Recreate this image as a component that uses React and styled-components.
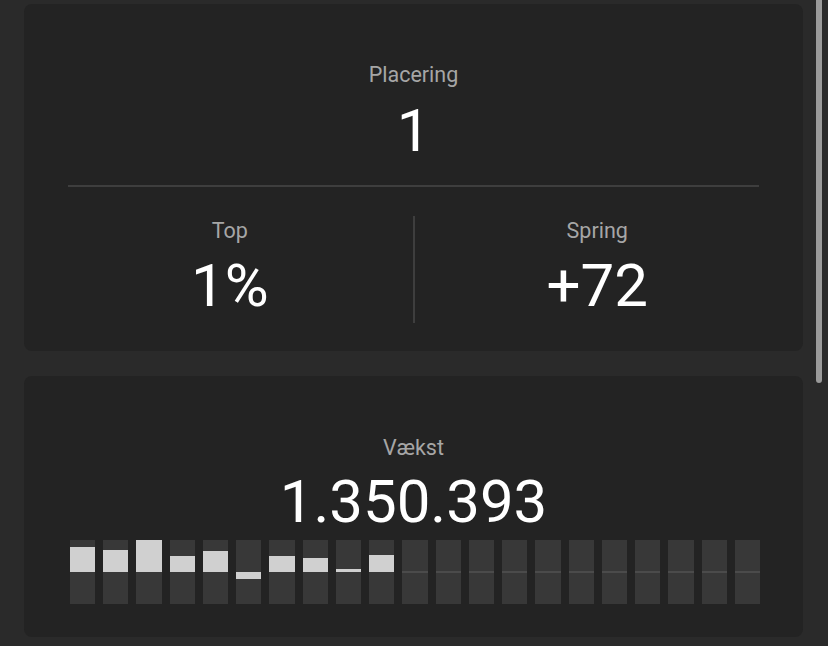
import React from "react";
import styled, { createGlobalStyle } from "styled-components";

const GlobalStyle = createGlobalStyle`
  html, body {
    margin: 0;
    padding: 0;
    background: #2a2a2a;
    overflow: hidden;
  }
  body {
    font-family: Roboto, "Liberation Sans", sans-serif;
  }
`;

const growth = [25, 22, 32, 16, 21, -7, 16, 14, 3, 17, 0, 0, 0, 0, 0, 0, 0, 0, 0, 0, 0];

const App = () => {
  return (
    <Page>
      <GlobalStyle />
      <Card $pb={0}>
        <Stat $top={58}>
          <Label>Placering</Label>
          <Value>1</Value>
        </Stat>
        <Divider />
        <Split>
          <Stat>
            <Label>Top</Label>
            <Value>1%</Value>
          </Stat>
          <VLine />
          <Stat>
            <Label>Spring</Label>
            <Value>+72</Value>
          </Stat>
        </Split>
      </Card>
      <Card $pb={33}>
        <Stat $top={59} $gap={12}>
          <Label>Vækst</Label>
          <Value>1.350.393</Value>
        </Stat>
        <Bars>
          {growth.map((v, i) => (
            <Bar key={i}>
              <Half $up>
                {v > 0 && <Fill style={{ height: v }} />}
              </Half>
              <Half>
                {v < 0 && <Fill style={{ height: -v }} />}
              </Half>
              {v === 0 && <Zero />}
            </Bar>
          ))}
        </Bars>
      </Card>
      <Card $pb={200} />
      <Thumb />
    </Page>
  );
};

const Page = styled.div`
  display: flex;
  flex-direction: column;
  gap: 25px;
  padding: 4px 25px 0 24px;
`;

const Card = styled.div`
  background: #232323;
  border-radius: 8px;
  padding: 0 44px ${(p) => p.$pb}px;
  display: flex;
  flex-direction: column;
`;

const Stat = styled.div`
  display: flex;
  flex-direction: column;
  align-items: center;
  gap: ${(p) => p.$gap || 14}px;
  padding-top: ${(p) => p.$top || 0}px;
`;

const Label = styled.div`
  font-size: 21.5px;
  line-height: 25px;
  color: #a6a6a6;
`;

const Value = styled.div`
  font-size: 60px;
  line-height: 60px;
  color: #ffffff;
`;

const Divider = styled.div`
  height: 2px;
  background: #3e3e3e;
  margin-top: 24px;
`;

const Split = styled.div`
  display: grid;
  grid-template-columns: 1fr 2px 1fr;
  column-gap: 21px;
  padding: 29px 0 28px;
  ${Stat} {
    padding-top: 2px;
    gap: 13px;
  }
`;

const VLine = styled.div`
  background: #3e3e3e;
  height: 107px;
`;

const Bars = styled.div`
  display: grid;
  grid-template-columns: repeat(21, 1fr);
  column-gap: 8px;
  margin: 8px -1px 0 2px;
`;

const Bar = styled.div`
  position: relative;
  height: 64px;
  background: #383838;
  display: flex;
  flex-direction: column;
`;

const Half = styled.div`
  flex: 1;
  display: flex;
  flex-direction: column;
  justify-content: ${(p) => (p.$up ? "flex-end" : "flex-start")};
`;

const Fill = styled.div`
  background: #d0d0d0;
`;

const Zero = styled.div`
  position: absolute;
  left: 0;
  right: 0;
  top: 31px;
  height: 2px;
  background: #4b4b4b;
`;

const Thumb = styled.div`
  position: fixed;
  top: 0;
  right: 6px;
  width: 6px;
  height: 383px;
  border-radius: 0 0 3px 3px;
  background: #9a9a9a;
`;

export default App;
